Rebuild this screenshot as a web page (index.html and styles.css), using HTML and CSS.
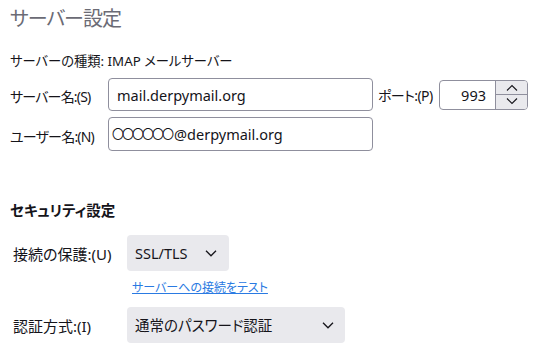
FILE: index.html
```html
<!DOCTYPE html>
<html lang="ja">
<head>
<meta charset="utf-8">
<link rel="stylesheet" href="styles.css">
</head>
<body>
<div class="page">
  <h1 class="title">サーバー設定</h1>
  <div class="type">サーバーの種類: IMAP メールサーバー</div>

  <div class="row row-server">
    <label class="lbl lbl-kana">サーバー名:(S)</label>
    <div class="input">mail.derpymail.org</div>
    <label class="lbl-port">ポート:(P)</label>
    <div class="port">
      <span class="port-val">993</span>
      <div class="spin">
        <span class="spin-btn"><svg width="12" height="7" viewBox="0 0 12 7"><path d="M1 6.5 L6 1.5 L11 6.5" fill="none" stroke="#15141a" stroke-width="1.1"/></svg></span>
        <span class="spin-btn"><svg width="12" height="7" viewBox="0 0 12 7"><path d="M1 0.5 L6 5.5 L11 0.5" fill="none" stroke="#15141a" stroke-width="1.1"/></svg></span>
      </div>
    </div>
  </div>

  <div class="row row-user">
    <label class="lbl lbl-kana">ユーザー名:(N)</label>
    <div class="input input-user"><span class="circles">〇〇〇〇〇〇</span>@derpymail.org</div>
  </div>

  <h2 class="section">セキュリティ設定</h2>

  <div class="row row-sec row-conn">
    <label class="lbl lbl-sec">接続の保護:(U)</label>
    <div class="select select-conn">
      <span>SSL/TLS</span>
      <svg class="chev" width="12" height="7" viewBox="0 0 12 7"><path d="M1 0.8 L6 5.8 L11 0.8" fill="none" stroke="#15141a" stroke-width="1.3"/></svg>
    </div>
  </div>

  <a class="link" href="#">サーバーへの接続をテスト</a>

  <div class="row row-sec row-auth">
    <label class="lbl lbl-sec">認証方式:(I)</label>
    <div class="select select-auth">
      <span>通常のパスワード認証</span>
      <svg class="chev" width="12" height="7" viewBox="0 0 12 7"><path d="M1 0.8 L6 5.8 L11 0.8" fill="none" stroke="#15141a" stroke-width="1.3"/></svg>
    </div>
  </div>
</div>
</body>
</html>
```
FILE: styles.css
```css
html, body {
  margin: 0;
  padding: 0;
  background: #ffffff;
}
body {
  width: 540px;
  height: 360px;
  overflow: hidden;
  font-family: "Noto Sans", "Noto Sans CJK JP", sans-serif;
  font-feature-settings: "palt";
  color: #15141a;
}
.page {
  padding: 7px 0 0 10px;
  display: flex;
  flex-direction: column;
  align-items: flex-start;
}
.title {
  margin: 0;
  font-size: 20px;
  line-height: 24px;
  font-weight: 400;
  letter-spacing: -1px;
  color: #6b6b75;
}
.type {
  margin-top: 20px;
  font-size: 13.3px;
  line-height: 20px;
  white-space: nowrap;
}
.row {
  display: flex;
  align-items: center;
}
.row-server {
  margin-top: 7px;
}
.row-user {
  margin-top: 6px;
}
.lbl {
  width: 98px;
  font-size: 14px;
  line-height: 20px;
  padding-top: 5px;
  white-space: nowrap;
}
.lbl-kana {
  letter-spacing: -0.8px;
}
.input {
  box-sizing: border-box;
  width: 265px;
  height: 33px;
  border: 1px solid #8f8f9d;
  border-radius: 4px;
  padding: 0 8px;
  display: flex;
  align-items: center;
  font-size: 14.5px;
  line-height: 20px;
  white-space: nowrap;
}
.input-user {
  height: 34px;
  padding-left: 3px;
}
.circles {
  font-family: "Noto Sans CJK JP", sans-serif;
  font-feature-settings: normal;
  font-size: 12px;
  letter-spacing: -2px;
  margin-right: 2px;
}
.lbl-port {
  margin-left: 5px;
  width: 61px;
  font-size: 14px;
  letter-spacing: -0.6px;
  line-height: 20px;
  padding-top: 3px;
  white-space: nowrap;
}
.port {
  box-sizing: border-box;
  width: 89px;
  height: 30px;
  border: 1px solid #8f8f9d;
  border-radius: 4px;
  display: flex;
  overflow: hidden;
}
.port-val {
  flex: 1;
  text-align: right;
  padding-right: 9px;
  font-size: 14.5px;
  line-height: 28px;
}
.spin {
  width: 31px;
  display: flex;
  flex-direction: column;
  border-left: 1px solid #8f8f9d;
}
.spin-btn {
  flex: 1;
  background: #e9e9ed;
  display: flex;
  align-items: center;
  justify-content: center;
}
.spin-btn + .spin-btn {
  border-top: 1px solid #8f8f9d;
}
.section {
  margin: 49px 0 0 0;
  font-size: 14.5px;
  line-height: 20px;
  font-weight: 700;
}
.row-conn {
  margin-top: 15px;
}
.row-auth {
  margin-top: 10px;
}
.lbl-sec {
  width: 114px;
  margin-left: 3px;
  padding-top: 2px;
  font-size: 15px;
}
.select {
  box-sizing: border-box;
  height: 36px;
  background: #e9e9ed;
  border-radius: 4px;
  display: flex;
  align-items: center;
  justify-content: space-between;
  padding: 0 12px 0 8px;
  font-size: 14.5px;
  line-height: 20px;
  white-space: nowrap;
}
.select-conn {
  width: 102px;
}
.select-auth {
  width: 218px;
  padding-right: 11px;
}
.chev {
  flex: none;
}
.link {
  margin: 8px 0 0 122px;
  font-size: 12px;
  line-height: 18px;
  color: #2a7ae2;
  text-decoration: underline;
}
```
